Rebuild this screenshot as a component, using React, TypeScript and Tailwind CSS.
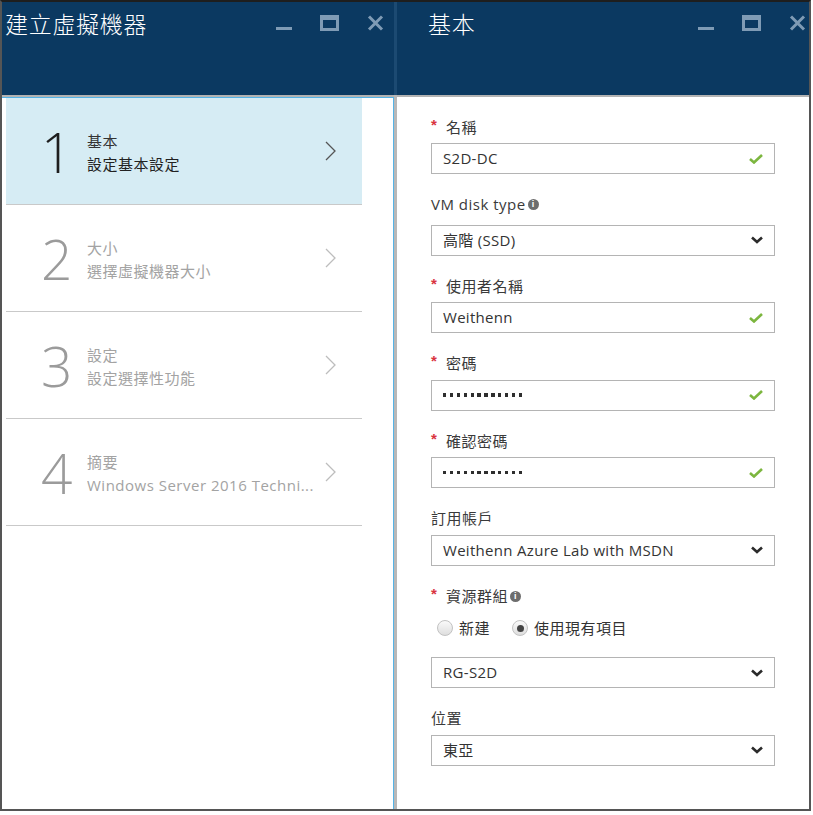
import React from "react";

const font = "font-['Open_Sans','Noto_Sans_CJK_TC',sans-serif]";

function WinControls({ className }: { className?: string }) {
  return (
    <div className={`flex items-start gap-[28px] text-[#7f9bb5] ${className ?? ""}`}>
      <svg width="16" height="16" viewBox="0 0 16 16">
        <rect x="0" y="12" width="16" height="3" fill="currentColor" />
      </svg>
      <svg width="19" height="16" viewBox="0 0 19 16">
        <rect x="1.5" y="2" width="16" height="12.5" fill="none" stroke="currentColor" strokeWidth="3" />
        <rect x="0" y="0" width="19" height="5" fill="currentColor" />
      </svg>
      <svg width="17" height="16" viewBox="0 0 17 16">
        <path d="M2 1.5 L15 14.5 M15 1.5 L2 14.5" stroke="currentColor" strokeWidth="3" />
      </svg>
    </div>
  );
}

function Chevron({ dark }: { dark?: boolean }) {
  return (
    <svg width="11" height="20" viewBox="0 0 11 20">
      <polyline
        points="1,1 10,10 1,19"
        fill="none"
        stroke={dark ? "#555" : "#bdbdbd"}
        strokeWidth="1.3"
      />
    </svg>
  );
}

const steps = [
  { n: "1", title: "基本", sub: "設定基本設定", active: true },
  { n: "2", title: "大小", sub: "選擇虛擬機器大小" },
  { n: "3", title: "設定", sub: "設定選擇性功能" },
  { n: "4", title: "摘要", sub: "Windows Server 2016 Techni..." },
];

function StepItem({ step }: { step: (typeof steps)[number] }) {
  return (
    <div
      className={`h-[107px] flex items-center border-b border-[#c9c9c9] ${
        step.active ? "bg-[#d6ecf4]" : "bg-white"
      }`}
    >
      <div
        className={`w-[81px] pl-[35px] text-[55px] font-light leading-none font-['Open_Sans',sans-serif] ${
          step.active ? "text-[#1e1e1e]" : "text-[#9b9b9b]"
        }`}
      >
        {step.n}
      </div>
      <div className="flex-1 min-w-0 pt-[4px] text-[15px] leading-[23px] tracking-[0.5px]">
        <div className={step.active ? "text-[#333]" : "text-[#a3a3a3]"}>{step.title}</div>
        <div className={`truncate ${step.active ? "text-[#222]" : "text-[#a3a3a3]"}`}>{step.sub}</div>
      </div>
      <div className="pl-[10px] pr-[26px] flex items-center">
        <Chevron dark={step.active} />
      </div>
    </div>
  );
}

function Check() {
  return (
    <svg width="14" height="10" viewBox="0 0 14 10">
      <path d="M1 5 L5 8.5 L13 1" fill="none" stroke="#7cb63f" strokeWidth="2.6" />
    </svg>
  );
}

function DownArrow() {
  return (
    <svg width="12" height="8" viewBox="0 0 12 8">
      <polyline points="1,1.5 6,6 11,1.5" fill="none" stroke="#2b2b2b" strokeWidth="2.6" />
    </svg>
  );
}

function Info() {
  return (
    <span className="ml-[2px] inline-flex w-[11px] h-[11px] rounded-full bg-[#6d6d6d] text-white text-[9px] font-bold leading-none items-center justify-center font-['Liberation_Sans',sans-serif]">
      i
    </span>
  );
}

function Label({ text, required, info }: { text: string; required?: boolean; info?: boolean }) {
  return (
    <div className="h-[20px] flex items-center text-[15px] text-[#3a3a3a] tracking-[0.5px]">
      {required && (
        <span className="w-[15px] text-[#d9343f] text-[15px] font-bold leading-none -mt-[6px] font-['Liberation_Sans',sans-serif]">
          *
        </span>
      )}
      <span>{text}</span>
      {info && <Info />}
    </div>
  );
}

function Box({ children, right }: { children: React.ReactNode; right: React.ReactNode }) {
  return (
    <div className="h-[31px] border border-[#b4b4b4] flex items-center justify-between pl-[11px] pr-[11px] text-[15px] text-[#333] tracking-[0.3px]">
      <div>{children}</div>
      {right}
    </div>
  );
}

function Dots() {
  return (
    <div className="flex gap-[3.6px]">
      {Array.from({ length: 12 }).map((_, i) => (
        <span key={i} className="w-[3.3px] h-[3.3px] bg-[#2e2e2e]" />
      ))}
    </div>
  );
}

function Radio({ checked }: { checked?: boolean }) {
  return (
    <span className="w-[16px] h-[16px] rounded-full border border-[#c2c2c2] bg-gradient-to-b from-[#fafafa] to-[#dedede] flex items-center justify-center">
      {checked && <span className="w-[7px] h-[7px] rounded-full bg-[#444]" />}
    </span>
  );
}

export default function App() {
  return (
    <div className={`w-[813px] h-[815px] bg-white ${font}`}>
      <div className="w-[811px] h-[811px] border-2 border-[#555] border-t-[#1e1e1e] flex">
        {/* left blade */}
        <div className="w-[392px] flex flex-col">
          <div className="h-[93px] bg-[#0b3961] flex items-start justify-between pl-[3px]">
            <div className="text-[23px] leading-[28px] mt-[8px] text-white font-light tracking-[0.7px]">建立虛擬機器</div>
            <WinControls className="mt-[13px] mr-[10px]" />
          </div>
          <div className="h-[2px] bg-[#b3b3b3]" />
          <div className="flex-1 border-t border-r border-[#55b3e6] pl-[4px] pr-[31px]">
            {steps.map((s) => (
              <StepItem key={s.n} step={s} />
            ))}
          </div>
        </div>

        {/* divider */}
        <div className="w-[3px] flex flex-col">
          <div className="h-[93px] bg-[#1c4a72]" />
          <div className="flex-1 bg-[#b8b8b8]" />
        </div>

        {/* right blade */}
        <div className="flex-1 flex flex-col">
          <div className="h-[93px] bg-[#0b3961] flex items-start justify-between pl-[31px]">
            <div className="text-[23px] leading-[28px] mt-[8px] text-white font-light tracking-[0.7px]">基本</div>
            <WinControls className="mt-[13px] mr-[3px]" />
          </div>
          <div className="h-[2px] bg-[#b3b3b3]" />
          <div className="flex-1 bg-white px-[34px] pt-[20px] flex flex-col gap-[20.5px]">
            <div>
              <Label text="名稱" required />
              <div className="mt-[6px]">
                <Box right={<Check />}>S2D-DC</Box>
              </div>
            </div>
            <div>
              <Label text="VM disk type" info />
              <div className="mt-[10px]">
                <Box right={<DownArrow />}>高階 (SSD)</Box>
              </div>
            </div>
            <div>
              <Label text="使用者名稱" required />
              <div className="mt-[6px]">
                <Box right={<Check />}>Weithenn</Box>
              </div>
            </div>
            <div>
              <Label text="密碼" required />
              <div className="mt-[6px]">
                <Box right={<Check />}>
                  <Dots />
                </Box>
              </div>
            </div>
            <div>
              <Label text="確認密碼" required />
              <div className="mt-[6px]">
                <Box right={<Check />}>
                  <Dots />
                </Box>
              </div>
            </div>
            <div>
              <Label text="訂用帳戶" />
              <div className="mt-[6px]">
                <Box right={<DownArrow />}>Weithenn Azure Lab with MSDN</Box>
              </div>
            </div>
            <div>
              <Label text="資源群組" required info />
              <div className="mt-[12px] h-[20px] flex items-center pl-[6px] text-[15px] text-[#333] tracking-[0.5px]">
                <Radio />
                <span className="ml-[6px]">新建</span>
                <span className="ml-[22px]">
                  <Radio checked />
                </span>
                <span className="ml-[6px]">使用現有項目</span>
              </div>
              <div className="mt-[19px]">
                <Box right={<DownArrow />}>RG-S2D</Box>
              </div>
            </div>
            <div>
              <Label text="位置" />
              <div className="mt-[6px]">
                <Box right={<DownArrow />}>東亞</Box>
              </div>
            </div>
          </div>
        </div>
      </div>
    </div>
  );
}
